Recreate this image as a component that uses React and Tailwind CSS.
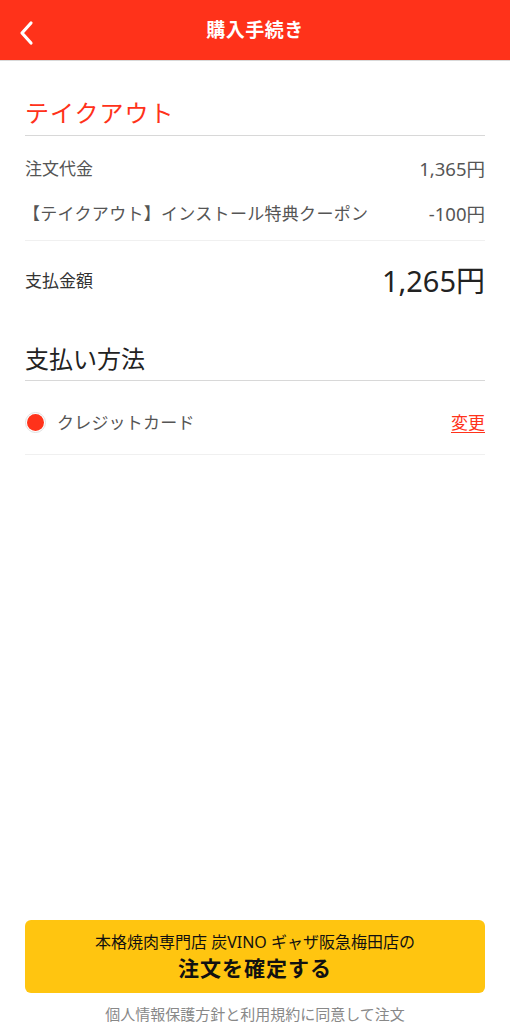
export default function App() {
  return (
    <div
      className="flex flex-col min-h-[1024px] bg-white"
      style={{ fontFamily: '"Noto Sans", "Noto Sans CJK JP", sans-serif' }}
    >
      {/* header */}
      <header className="relative flex items-center justify-center h-[61px] bg-[#ff321a] border-b border-[#d9d9d9]">
        <button className="absolute left-[18px] top-[20px] text-white">
          <svg width="18" height="26" viewBox="0 0 18 26" fill="none">
            <path d="M13 3 L4 13 L13 23" stroke="white" strokeWidth="3.2" strokeLinecap="round" strokeLinejoin="round" />
          </svg>
        </button>
        <h1 className="text-white text-[19px] font-bold tracking-[0.5px]">購入手続き</h1>
      </header>

      <main className="flex-1 px-[25px] pt-[34px]">
        {/* takeout */}
        <h2 className="text-[#ff321a] text-[24px] leading-[36px] pb-[4px] border-b border-[#d8d8d8] tracking-[1px]">テイクアウト</h2>
        <div className="text-[#555] text-[17px]">
          <div className="flex justify-between items-center h-[46px] mt-[10px]">
            <span>注文代金</span>
            <span className="text-[18.5px]">1,365円</span>
          </div>
          <div className="flex justify-between items-center h-[49px] pb-[4px] border-b border-[#f0f0f0]">
            <span className="-ml-[2px] tracking-[0.3px]">【テイクアウト】インストール特典クーポン</span>
            <span className="text-[18.5px]">-100円</span>
          </div>
          <div className="flex justify-between items-center h-[80px]">
            <span className="text-[#333]">支払金額</span>
            <span className="text-[#222] text-[29px]">1,265円</span>
          </div>
        </div>

        {/* payment */}
        <h2 className="text-[#222] text-[24px] leading-[36px] pb-[3px] mt-[20px] border-b border-[#d8d8d8]">支払い方法</h2>
        <div className="flex items-center justify-between h-[74px] pt-[10px] border-b border-[#f0f0f0]">
          <div className="flex items-center gap-[11px]">
            <span className="flex items-center justify-center w-[21px] h-[21px] rounded-full border border-[#e0e0e0]">
              <span className="w-[17px] h-[17px] rounded-full bg-[#ff321a]" />
            </span>
            <span className="text-[#555] text-[17px] tracking-[0.2px]">クレジットカード</span>
          </div>
          <a className="text-[#ff321a] text-[17px] underline underline-offset-[3px]">変更</a>
        </div>
      </main>

      {/* footer */}
      <footer className="px-[25px]">
        <button className="w-full h-[73px] rounded-[6px] bg-[#ffc510] flex flex-col items-center justify-center text-[#111]">
          <span className="text-[16px] leading-[22px]">本格焼肉専門店 炭VINO ギャザ阪急梅田店の</span>
          <span className="text-[21px] leading-[30px] font-bold tracking-[1px]">注文を確定する</span>
        </button>
        <p className="text-center text-[#888] text-[15px] leading-[20px] mt-[11px]">個人情報保護方針と利用規約に同意して注文</p>
      </footer>
    </div>
  );
}
